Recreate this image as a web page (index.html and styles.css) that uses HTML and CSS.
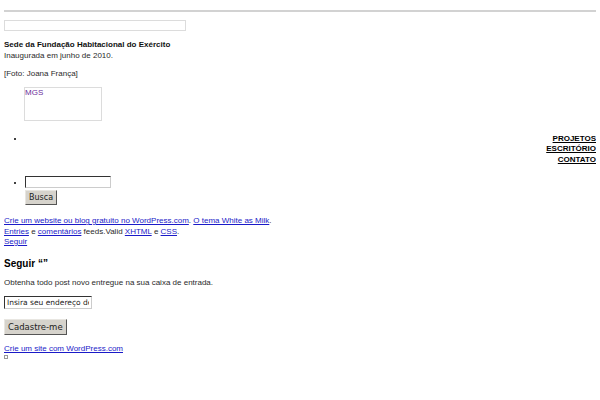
FILE: index.html
```html
<!DOCTYPE html>
<html lang="pt">
<head>
    <meta charset="UTF-8">
    <title>MGS</title>
    <link rel="stylesheet" href="styles.css">
</head>
<body>
    <div class="rule"></div>
    <div class="top-box"></div>

    <div class="caption">
        <p class="caption-title">Sede da Fundação Habitacional do Exército</p>
        <p>Inaugurada em junho de 2010.</p>
        <p class="credit">[Foto: Joana França]</p>
    </div>

    <div class="logo"><a href="#">MGS</a></div>

    <ul class="sidebar">
        <li>
            <ul class="nav">
                <li><a href="#">PROJETOS</a></li>
                <li><a href="#">ESCRITÓRIO</a></li>
                <li><a href="#">CONTATO</a></li>
            </ul>
        </li>
        <li class="search">
            <input type="text" class="search-field">
            <button class="btn btn-search">Busca</button>
        </li>
    </ul>

    <div class="footer">
        <a href="#">Crie um website ou blog gratuito no WordPress.com</a>. <a href="#">O tema White as Milk</a>.<br>
        <a href="#">Entries</a> e <a href="#">comentários</a> feeds.Valid <a href="#">XHTML</a> e <a href="#">CSS</a>.<br>
        <a href="#">Seguir</a>
    </div>

    <div class="follow">
        <h3>Seguir “”</h3>
        <p>Obtenha todo post novo entregue na sua caixa de entrada.</p>
        <input type="text" class="email-field" value="Insira seu endereço de e-mail">
        <button class="btn btn-signup">Cadastre-me</button>
        <a href="#" class="made-with">Crie um site com WordPress.com</a>
        <span class="pixel"></span>
    </div>
</body>
</html>
```

FILE: styles.css
```css
body {
    margin: 4px;
    font-family: "Liberation Sans", Arial, sans-serif;
    font-size: 8px;
    line-height: 10.5px;
    color: #2a2a2a;
    background: #fff;
}
a {
    color: #1a1ac8;
}
p {
    margin: 0;
}
.rule {
    border-top: 2px solid #d2d2d2;
    margin-top: 6px;
}
.top-box {
    width: 180px;
    height: 9px;
    border: 1px solid #dcdcdc;
    margin-top: 8px;
}
.caption {
    margin-top: 9px;
}
.caption-title {
    font-weight: bold;
    color: #111;
}
.credit {
    margin-top: 8px;
}
.logo {
    width: 76px;
    height: 32px;
    margin: 7px 0 0 20px;
    border: 1px solid #dcdcdc;
}
.logo a {
    color: #6a2c9a;
    text-decoration: none;
}
.sidebar {
    margin: 13px 0 0;
    padding-left: 21px;
    color: #000;
}
.nav {
    list-style: none;
    margin: 0 0 11px;
    padding: 0;
    text-align: right;
}
.nav a {
    color: #000;
    font-weight: bold;
}
.search-field {
    display: block;
    width: 82px;
    height: 8px;
    margin: 0;
    padding: 1px;
    border: 1px solid #ccc;
    border-top-color: #333;
    border-left-color: #333;
    font: 8px "Liberation Sans", Arial, sans-serif;
}
.btn {
    display: block;
    padding: 0 3px;
    background: #d6d3cc;
    border: 1px solid #e8e6e1;
    border-right-color: #555;
    border-bottom-color: #555;
    font-family: "DejaVu Sans", sans-serif;
    color: #222;
}
.btn-search {
    height: 15px;
    margin-top: 2px;
    font-size: 8px;
}
.footer {
    margin-top: 11px;
}
.follow h3 {
    margin: 10px 0 0;
    font-size: 10px;
    line-height: 12px;
    color: #000;
}
.follow p {
    margin-top: 8px;
}
.email-field {
    display: block;
    width: 82px;
    height: 9px;
    margin-top: 8px;
    padding: 1px 2px;
    border: 1px solid #ccc;
    border-top-color: #333;
    border-left-color: #333;
    font: 7.5px "DejaVu Sans", sans-serif;
    color: #222;
}
.btn-signup {
    height: 16px;
    margin-top: 10px;
    font-size: 8.5px;
}
.made-with {
    display: block;
    margin-top: 9px;
}
.pixel {
    display: block;
    width: 2px;
    height: 2px;
    border: 1px solid #999;
}
```
